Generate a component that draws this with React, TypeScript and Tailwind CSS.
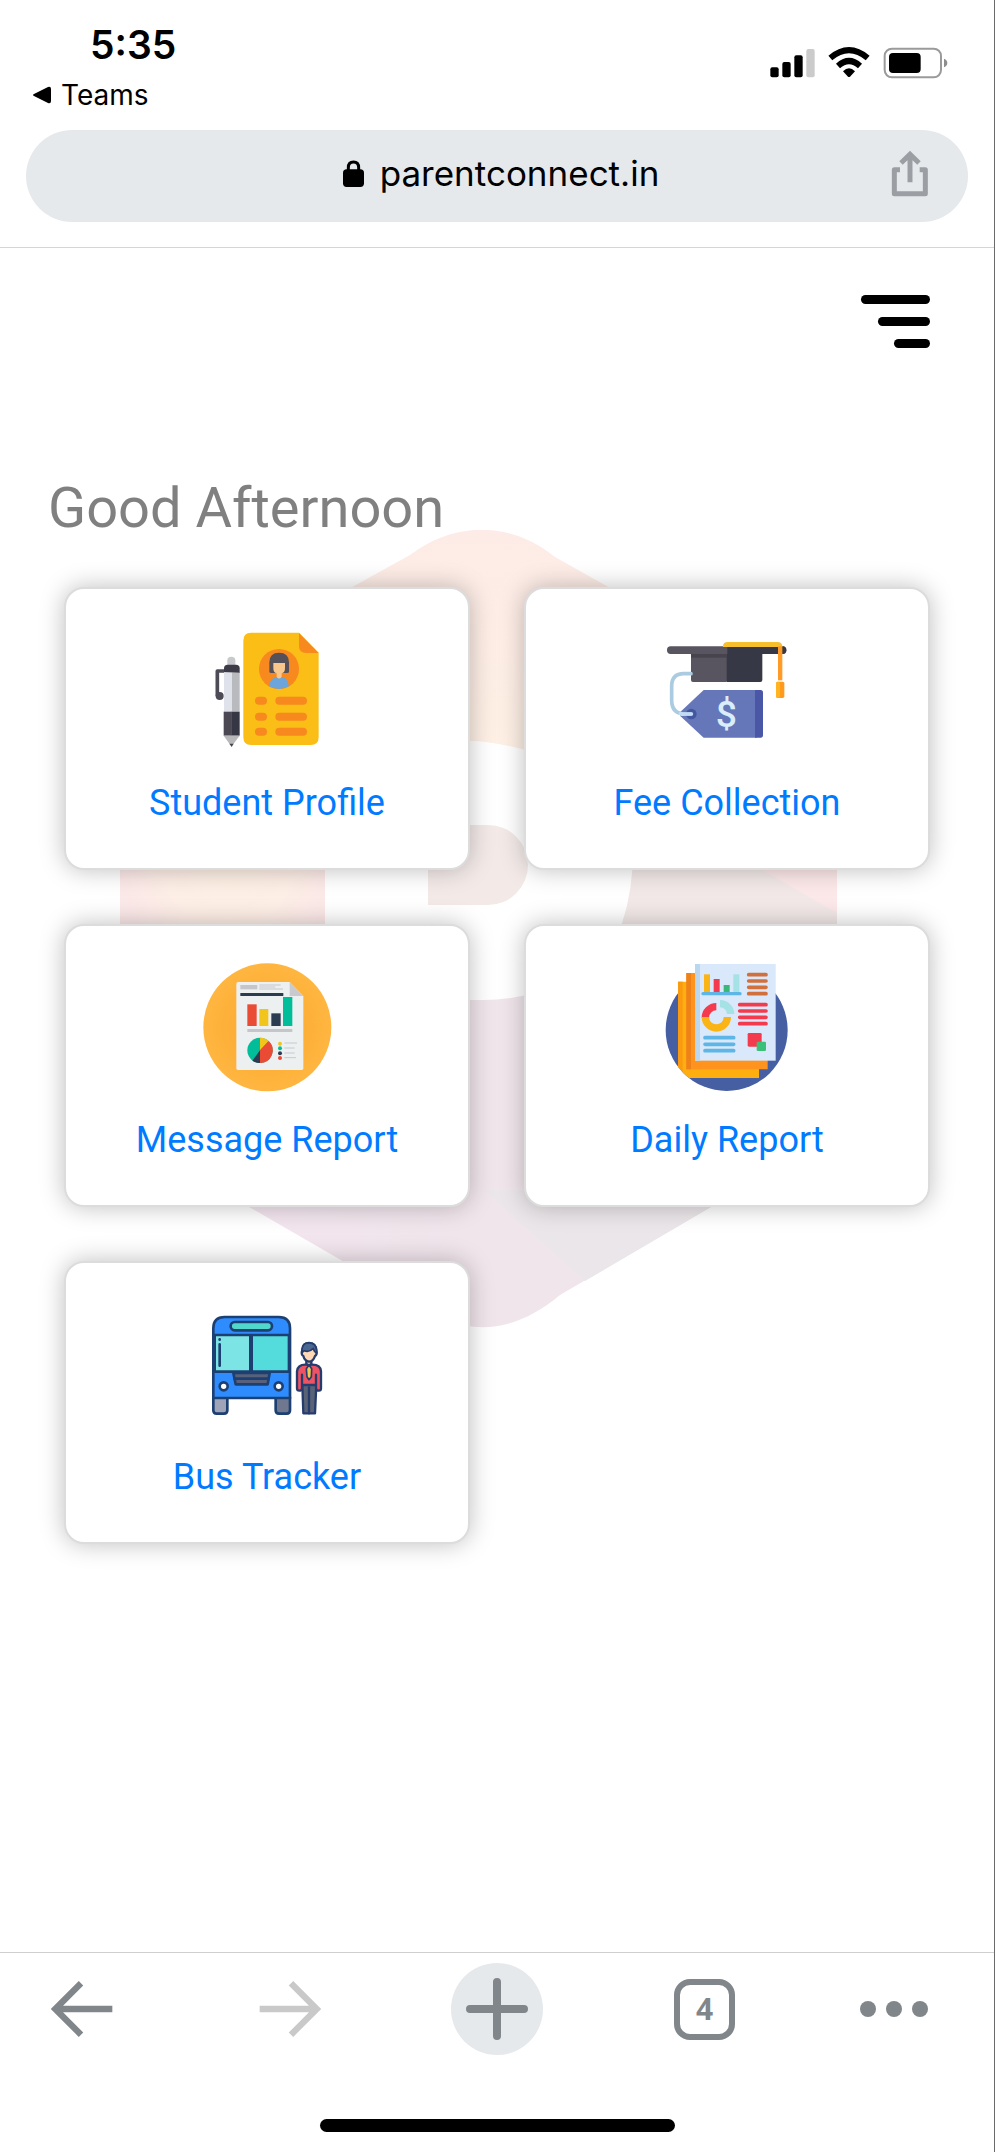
import type { ReactNode } from "react";

function StatusIcons() {
  return (
    <svg width="180" height="35" viewBox="825 135 540 105" aria-hidden="true">
      <rect x="826" y="202" width="25" height="30" rx="6" />
      <rect x="862" y="186" width="25" height="46" rx="6" />
      <rect x="898" y="166" width="25" height="66" rx="6" />
      <rect x="934" y="147" width="25" height="85" rx="6" fill="#cbcbcb" />
      <g fill="none" stroke="#000" strokeWidth="18">
        <path d="M1006 174 Q1062 127 1118 174" />
        <path d="M1029 198 Q1062 168 1095 198" />
      </g>
      <path d="M1044 214 Q1062 196 1080 214 L1065 230 Q1062 232 1059 230 Z" />
      <rect x="1169" y="146" width="169" height="86" rx="22" fill="none" stroke="#9a9a9a" strokeWidth="6" />
      <rect x="1182" y="159" width="95" height="60" rx="12" />
      <path d="M1347 176 Q1357 180 1357 189 Q1357 198 1347 202 Z" fill="#8e8e8e" />
    </svg>
  );
}

function ProfileIcon() {
  return (
    <svg width="160" height="160" viewBox="-7 -6 480 480" aria-hidden="true">
      <path d="M104 186 H84 V262" fill="none" stroke="#4d4b55" strokeWidth="11" strokeLinejoin="round" />
      <circle cx="91" cy="261" r="12" fill="#4d4b55" />
      <path d="M114 168 V154 Q114 143 126 143 Q138 143 138 154 V168 Z" fill="#c8c9cc" />
      <path d="M104 190 V178 Q104 167 115 167 H140 Q151 167 151 178 V192 Z" fill="#3c3b47" />
      <rect x="104" y="191" width="24" height="117" fill="#dfe2ea" />
      <rect x="128" y="191" width="23" height="117" fill="#b9babd" />
      <rect x="103" y="308" width="24" height="72" fill="#4b4854" />
      <rect x="126" y="308" width="25" height="72" fill="#353744" />
      <path d="M103 380 H151 L130 408 H123 Z" fill="#b8b8ba" />
      <path d="M120 404 H133 L127 414 Z" fill="#45444e" />
      <path d="M185 71 H329 L388 131 V384 Q388 408 364 408 H185 Q162 408 162 384 V95 Q162 71 185 71 Z" fill="#fabe17" />
      <path d="M329 72 L388 132 H350 Q329 132 329 111 Z" fill="#f7891f" />
      <circle cx="269" cy="180" r="60" fill="#f7891f" />
      <path d="M240 188 V160 Q240 131 269 131 Q299 131 299 160 V188 Q299 192 293 192 H246 Q240 192 240 188 Z" fill="#565059" />
      <path d="M252 162 H287 V178 Q287 191 277 193 V212 H262 V193 Q252 191 252 178 Z" fill="#f9c78b" />
      <path d="M239 232 Q243 205 262 204 Q269 213 277 204 Q295 205 299 232 Q269 248 239 232 Z" fill="#6ba5dc" />
      <g fill="#f7891f">
        <rect x="197" y="263" width="36" height="24" rx="12" />
        <rect x="258" y="263" width="95" height="24" rx="12" />
        <rect x="197" y="311" width="36" height="24" rx="12" />
        <rect x="258" y="311" width="95" height="24" rx="12" />
        <rect x="197" y="356" width="36" height="24" rx="12" />
        <rect x="258" y="356" width="95" height="24" rx="12" />
      </g>
    </svg>
  );
}

function FeeIcon() {
  return (
    <svg width="160" height="160" viewBox="21 -36 480 480" aria-hidden="true">
      <rect x="153" y="100" width="110" height="89" rx="6" fill="#595560" />
      <path d="M260 100 H367 V183 Q367 189 361 189 H260 Z" fill="#363845" />
      <rect x="153" y="104" width="108" height="12" fill="#48444e" />
      <rect x="81" y="82" width="358" height="23" rx="11" fill="#595560" />
      <path d="M262 82 H428 Q439 83 439 94 Q439 105 428 105 H262 Z" fill="#363845" />
      <path d="M249 82 Q249 69 264 69 H412 Q427 69 427 84 H249 Z" fill="#f8bf2c" />
      <rect x="414" y="82" width="13" height="102" fill="#ff9a26" />
      <rect x="408" y="188" width="25" height="49" rx="5" fill="#ff9a1c" />
      <rect x="408" y="188" width="12" height="49" rx="5" fill="#ffb420" />
      <path d="M191 213 H350 V356 H191 L120 290 V280 Z" fill="#6577b9" />
      <path d="M345 213 H362 Q369 213 369 221 V348 Q369 356 362 356 H345 Z" fill="#4a57a6" />
      <circle cx="154" cy="285" r="16" fill="#4456a0" />
      <path d="M153 164 H131 Q95 164 95 202 V244 Q95 285 135 285 H154" fill="none" stroke="#abcce0" strokeWidth="11" strokeLinecap="round" />
      <path d="M122 284 Q128 286 135 285 H154" fill="none" stroke="#c3dcf3" strokeWidth="11" strokeLinecap="round" />
      <text x="259" y="323" textAnchor="middle" fontSize="112" fill="#d9edfb" className="font-['Roboto',sans-serif] font-medium">$</text>
    </svg>
  );
}

function MessageIcon() {
  return (
    <svg width="160" height="160" viewBox="-7 -3 480 480" aria-hidden="true">
      <defs>
        <radialGradient id="amber-disc">
          <stop offset="0" stopColor="#f9a62f" />
          <stop offset="1" stopColor="#ffb640" />
        </radialGradient>
      </defs>
      <circle cx="234" cy="247" r="192" fill="url(#amber-disc)" />
      <path d="M146 111 H301 L342 153 V370 Q342 375 337 375 H146 Q141 375 141 370 V116 Q141 111 146 111 Z" fill="#edf0f1" />
      <path d="M301 111 L342 153 H301 Z" fill="#c9cacf" />
      <rect x="153" y="120" width="51" height="13" fill="#c5c6ca" />
      <path d="M210 120 H274 M210 126 H258 M210 132 H281" stroke="#c5c6ca" strokeWidth="3" />
      <rect x="153" y="144" width="129" height="9" fill="#2b3b4e" />
      <rect x="174" y="178" width="28" height="65" fill="#e94b35" />
      <rect x="210" y="192" width="27" height="51" fill="#f2c51d" />
      <rect x="246" y="205" width="28" height="38" fill="#2c3c50" />
      <rect x="281" y="156" width="28" height="87" fill="#02bd9a" />
      <rect x="174" y="252" width="135" height="9" fill="#c5c6ca" />
      <circle cx="212" cy="316" r="38" fill="#02bd9a" />
      <path d="M212 316 V278 A38 38 0 0 1 238 288 Z" fill="#f2c51d" />
      <path d="M212 316 L238 288 A38 38 0 0 1 212 354 Z" fill="#e94b35" />
      <path d="M212 316 V354 A38 38 0 0 1 189 347 Z" fill="#2c3c50" />
      <circle cx="272" cy="296" r="6" fill="#f2c51d" />
      <circle cx="272" cy="310" r="6" fill="#02bd9a" />
      <circle cx="272" cy="325" r="6" fill="#2c3c50" />
      <circle cx="272" cy="339" r="6" fill="#e94b35" />
      <path d="M285 294 H323 M285 309 H316 M285 324 H316 M285 338 H320" stroke="#c8c9cd" strokeWidth="3" />
    </svg>
  );
}

function DailyIcon() {
  return (
    <svg width="160" height="160" viewBox="6 -3 480 480" aria-hidden="true">
      <defs>
        <clipPath id="daily-clip">
          <path d="M99 0 H430 V255 A183 183 0 0 1 99 365 Z" />
        </clipPath>
      </defs>
      <circle cx="245" cy="255" r="183" fill="#465fa3" />
      <g clipPath="url(#daily-clip)">
        <path d="M99 110 H342 V399 H99 Z" fill="#ffae10" />
        <rect x="99" y="110" width="14" height="289" fill="#f99a10" />
        <path d="M124 84 H368 V373 H124 Z" fill="#ff931e" />
        <rect x="124" y="84" width="14" height="289" fill="#ee8118" />
      </g>
      <rect x="150" y="57" width="242" height="290" fill="#d9e8fa" />
      <rect x="150" y="57" width="15" height="290" fill="#b9d7ee" />
      <rect x="177" y="88" width="18" height="55" fill="#fbb416" />
      <rect x="206" y="102" width="18" height="41" fill="#f43b4e" />
      <rect x="236" y="120" width="18" height="23" fill="#3bb878" />
      <rect x="265" y="88" width="18" height="55" fill="#a5e2e5" />
      <rect x="169" y="141" width="121" height="10" rx="5" fill="#5db6e6" />
      <g strokeWidth="11" strokeLinecap="round">
        <path d="M311 89 H363 M311 108 H363 M311 127 H363 M311 146 H363" stroke="#d1703d" />
        <path d="M284 179 H363 M284 198 H363 M284 217 H363 M284 236 H363" stroke="#f43b4e" />
        <path d="M180 278 H266 M180 298 H266 M180 317 H266" stroke="#5db6e6" />
      </g>
      <g fill="none" strokeWidth="22">
        <path d="M181 218 A33 33 0 0 1 214 185" stroke="#f43b4e" />
        <path d="M181 216 A33 33 0 0 0 247 216" stroke="#fbb416" />
        <path d="M225 176 A32 32 0 0 1 257 207" stroke="#a5e2e5" />
      </g>
      <rect x="308" y="264" width="42" height="41" rx="4" fill="#f43b4e" />
      <rect x="335" y="290" width="28" height="28" rx="4" fill="#3bc07a" />
    </svg>
  );
}

function BusIcon() {
  return (
    <svg width="160" height="160" viewBox="-22 -45 480 480" aria-hidden="true">
      <g stroke="#1d4072" strokeWidth="8" strokeLinejoin="round" strokeLinecap="round">
        <path d="M57 305 H99 V343 Q99 353 89 353 H67 Q57 353 57 343 Z" fill="#a0a4b8" />
        <path d="M244 305 H287 V343 Q287 353 277 353 H254 Q244 353 244 343 Z" fill="#70788f" />
        <path d="M57 306 V97 Q57 63 91 63 H253 Q287 63 287 97 V306 Z" fill="#2e8cff" />
        <path d="M61 117 H168 V227 H61 Z" fill="#7de4e6" />
        <path d="M172 117 H284 V227 H172 Z" fill="#54dbdb" />
        <path d="M170 117 V227" />
        <rect x="109" y="78" width="124" height="25" rx="12" fill="#50d8cd" />
        <path d="M117 231 H226 L220 265 H124 Z" fill="#59607a" />
        <path d="M120 248 H222" />
        <circle cx="88" cy="271" r="12" fill="#fff" />
        <circle cx="253" cy="271" r="12" fill="#fff" />
        <path d="M76 145 V209 M76 130 V131" />
      </g>
      <g stroke="#263c6d" strokeWidth="7" strokeLinejoin="round" strokeLinecap="round">
        <path d="M324 266 H366 L362 352 H327 Z" fill="#596375" />
        <path d="M344 274 V352" />
        <path d="M333 206 H354 Q379 206 380 226 V277 Q380 284 374 284 Q366 284 365 277 V267 H323 V277 Q322 284 315 284 Q308 284 308 277 V226 Q310 206 333 206 Z" fill="#ee5263" />
        <path d="M323 236 V267 M365 236 V267" />
        <path d="M336 188 H351 V204 L344 209 L336 204 Z" fill="#e6b08e" />
        <path d="M344 207 L336 218 L338 242 L344 251 L351 242 L352 218 Z" fill="#f2c84f" strokeWidth="5" />
        <path d="M324 162 Q325 141 344 141 Q365 141 366 164 Q369 176 362 180 Q357 196 344 197 Q331 195 327 180 Q319 176 324 162 Z" fill="#ffd9b5" />
        <path d="M323 170 V160 Q325 140 344 141 Q365 141 367 163 V171 Q358 166 357 157 Q344 170 330 164 Z" fill="#4a6791" strokeWidth="5" />
      </g>
    </svg>
  );
}

/* Faint hexagonal school emblem behind the cards */
function Emblem() {
  return (
    <svg
      className="pointer-events-none absolute top-[282px] left-[120px]"
      width="717"
      height="800"
      viewBox="120 530 717 800"
      aria-hidden="true"
    >
      <defs>
        <linearGradient id="emblem-top" x1="0" y1="0" x2="0" y2="1">
          <stop offset="0" stopColor="#fdebe7" />
          <stop offset="1" stopColor="#fdf0e4" />
        </linearGradient>
        <linearGradient id="emblem-bottom" x1="0" y1="0" x2="1" y2="0">
          <stop offset="0" stopColor="#f4e5f0" />
          <stop offset="0.5" stopColor="#f0e5eb" />
          <stop offset="1" stopColor="#efe5ea" />
        </linearGradient>
        <radialGradient id="emblem-left" gradientUnits="userSpaceOnUse" cx="228" cy="860" r="110">
          <stop offset="0" stopColor="#fdf0e4" />
          <stop offset="0.6" stopColor="#fdeee6" />
          <stop offset="1" stopColor="#fbe8e8" />
        </radialGradient>
      </defs>
      <path d="M300 616 L410 555 C455 521 510 521 555 557 L660 616 L560 760 Q500 741 470 741 H300 Z" fill="url(#emblem-top)" />
      <rect x="120" y="800" width="205" height="180" fill="url(#emblem-left)" />
      <path d="M428 825 H488 A40 40 0 0 1 488 905 H428 Z" fill="#f3eae8" />
      <path d="M633 850 H837 V980 H590 Q633 930 633 850 Z" fill="#f2e8e8" />
      <path d="M728 850 H837 V913 Z" fill="#fce8e8" />
      <path d="M230 1000 H484 Q520 1000 560 985 H740 V1190 L560 1295 C510 1337 460 1337 410 1300 L230 1196 Z" fill="url(#emblem-bottom)" />
      <path d="M484 1190 H740 L585 1281 Z" fill="#ebe6e9" />
    </svg>
  );
}

function ServiceCard({ label, children }: { label: string; children: ReactNode }) {
  return (
    <a
      href="#"
      className="relative flex h-[283px] flex-col items-center rounded-[20px] border-2 border-[#dcdcdc] bg-white pt-[18px] shadow-[0_0_24px_rgba(0,0,0,0.25)]"
    >
      {children}
      <span className="mt-3 text-[36px] leading-[48px] text-[#007bff]">{label}</span>
    </a>
  );
}

export default function App() {
  return (
    <div className="flex min-h-screen flex-col border-r border-[#6b6b6b] bg-white font-['Roboto',sans-serif]">
      <header className="border-b border-[#d4d5d6] pb-[25px] font-['Inter',sans-serif] text-black">
        <div className="flex justify-between pt-5 pr-[44px] pb-[10px] pl-[33px]">
          <div>
            <div className="pl-[57px] text-[39px] leading-[50px] font-semibold">5:35</div>
            <a href="#" className="flex items-center gap-[10px] text-[28px] leading-[50px]">
              <svg width="18" height="18" viewBox="0 0 18 18" aria-hidden="true">
                <path d="M1 8 L15 1 Q18 0 18 3 V15 Q18 18 15 17 L1 10 Q-1 9 1 8 Z" />
              </svg>
              Teams
            </a>
          </div>
          <div className="pt-[25px]">
            <StatusIcons />
          </div>
        </div>
        <div className="mx-[26px] grid h-[92px] grid-cols-[1fr_auto_1fr] items-center rounded-full bg-[#e6e9ec] pl-2">
          <span />
          <button type="button" className="flex items-center gap-4 pb-1.5 text-[35px]">
            <svg width="21" height="27" viewBox="0 0 63 81" aria-hidden="true">
              <rect x="0" y="28" width="63" height="53" rx="11" />
              <path d="M16 34 V23 Q16 6 31.500 6 Q47 6 47 23 V34" fill="none" stroke="#000" strokeWidth="9" />
            </svg>
            parentconnect.in
          </button>
          <button type="button" aria-label="Share" className="mr-[38px] justify-self-end pb-1">
            <svg width="40" height="48" viewBox="1186 446 120 144" fill="none" stroke="#9b9fa4" strokeWidth="15" aria-hidden="true">
              <path d="M1216 505 H1199 V577 H1292 V505 H1275" strokeLinejoin="round" />
              <path d="M1246 543 V462 M1219 485 L1246 459 L1273 485" />
            </svg>
          </button>
        </div>
      </header>

      <main className="relative flex-1 px-16 pt-[47px]">
        <Emblem />
        <div className="flex justify-end">
          <button type="button" aria-label="Open menu" className="flex h-[53px] flex-col items-end justify-between">
            <span className="h-[9px] w-[69px] rounded-full bg-black" />
            <span className="h-[9px] w-[52px] rounded-full bg-black" />
            <span className="h-[9px] w-[36px] rounded-full bg-black" />
          </button>
        </div>
        <h1 className="relative -ml-4 pt-32 text-[56px] leading-[64px] text-[#808080]">Good Afternoon</h1>
        <div className="mt-[47px] grid grid-cols-2 gap-x-[54px] gap-y-[54px] pb-16">
          <ServiceCard label="Student Profile"><ProfileIcon /></ServiceCard>
          <ServiceCard label="Fee Collection"><FeeIcon /></ServiceCard>
          <ServiceCard label="Message Report"><MessageIcon /></ServiceCard>
          <ServiceCard label="Daily Report"><DailyIcon /></ServiceCard>
          <ServiceCard label="Bus Tracker"><BusIcon /></ServiceCard>
        </div>
      </main>

      <footer className="border-t border-[#cfcfcf] pt-[10px] pb-5">
        <nav className="grid grid-cols-[208fr_208fr_208fr_202fr_68fr] pr-[66px] pl-9 text-[#80868a]">
          <button type="button" aria-label="Back" className="flex size-[92px] items-center justify-center">
            <svg width="62" height="56" viewBox="0 0 186 168" fill="none" stroke="currentColor" strokeWidth="19" aria-hidden="true">
              <path d="M184 84 H20 M90 7 L13 84 L90 161" />
            </svg>
          </button>
          <button type="button" aria-label="Forward" disabled className="flex size-[92px] items-center justify-center text-[#c9c9c9]">
            <svg width="62" height="56" viewBox="0 0 186 168" fill="none" stroke="currentColor" strokeWidth="19" aria-hidden="true">
              <path d="M2 84 H166 M96 7 L173 84 L96 161" />
            </svg>
          </button>
          <button type="button" aria-label="New tab" className="flex size-[92px] items-center justify-center rounded-full bg-[#e6e9ec]">
            <svg width="62" height="62" viewBox="0 0 62 62" stroke="currentColor" strokeWidth="8" strokeLinecap="round" aria-hidden="true">
              <path d="M31 4 V58 M4 31 H58" />
            </svg>
          </button>
          <button type="button" aria-label="Tabs" className="flex size-[92px] items-center justify-center">
            <span className="flex size-[61px] items-center justify-center rounded-2xl border-[6px] border-current font-['Open_Sans',sans-serif] text-[30px] leading-none font-bold">
              4
            </span>
          </button>
          <button type="button" aria-label="More" className="flex h-[92px] items-center justify-between">
            <span className="size-4 rounded-full bg-current" />
            <span className="size-4 rounded-full bg-current" />
            <span className="size-4 rounded-full bg-current" />
          </button>
        </nav>
        <div className="mx-auto mt-16 h-[13px] w-[355px] rounded-full bg-black" />
      </footer>
    </div>
  );
}
